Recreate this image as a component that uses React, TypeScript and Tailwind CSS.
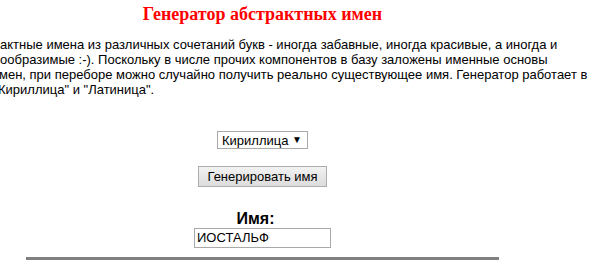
import React from "react"

const lines = [
  "актные имена из различных сочетаний букв - иногда забавные, иногда красивые, а иногда и",
  "ообразимые :-). Поскольку в числе прочих компонентов в базу заложены именные основы",
  "мен, при переборе можно случайно получить реально существующее имя. Генератор работает в",
  "Кириллица\" и \"Латиница\".",
]

export default function App() {
  return (
    <div className="w-[595px] h-[278px] overflow-hidden bg-white text-black font-['Liberation_Sans',Arial,sans-serif]">
      <div className="w-[525px] flex flex-col items-center">
        <h1 className="mt-[4px] leading-[20px] text-[18px] font-bold text-[#ff0000] font-['Liberation_Serif','Times_New_Roman',serif]">
          Генератор абстрактных имен
        </h1>
      </div>

      <div className="mt-[13px] text-[13px] leading-[15px] whitespace-nowrap">
        {lines.map((l, i) => (
          <div key={i} className={i === 3 ? "-ml-[2px]" : i === 2 ? "-ml-[1px]" : ""}>
            {l}
          </div>
        ))}
      </div>

      <div className="w-[525px] flex flex-col items-center">
        <div className="mt-[34px] w-[91px] h-[18px] border border-[#a9a9a9] bg-white flex items-center justify-between pl-[4px] pr-[5px] text-[13px] leading-none">
          <span>Кириллица</span>
          <span className="text-[10px]">▼</span>
        </div>

        <button className="mt-[17px] h-[21px] w-[129px] border border-[#adadad] bg-gradient-to-b from-[#f2f2f2] to-[#dcdcdc] text-[13px] leading-none">
          Генерировать имя
        </button>

        <div className="mt-[23px] h-[18px] leading-[18px] text-[16px] font-bold pr-[14px]">Имя:</div>
        <div className="w-[137px] h-[20px] border border-[#a9a9a9] flex items-center pl-[2px] text-[13px]">
          ИОСТАЛЬФ
        </div>
      </div>

      <div className="mt-[9px] ml-[26px] w-[473px] h-[3px] bg-[#808080]" />
    </div>
  )
}
